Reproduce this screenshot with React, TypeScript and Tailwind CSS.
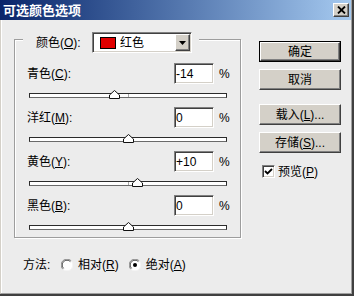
import React from 'react';

const rows = [
  { label: '青色', key: 'C', text: '-14', v: -14 },
  { label: '洋红', key: 'M', text: '0', v: 0 },
  { label: '黄色', key: 'Y', text: '+10', v: 10 },
  { label: '黑色', key: 'B', text: '0', v: 0 },
];

function Bevel({ children, className = '' }: { children?: React.ReactNode; className?: string }) {
  return (
    <div
      className={
        'bg-[#d4d0c8] border border-t-white border-l-white border-r-[#404040] border-b-[#404040] shadow-[inset_-1px_-1px_0_#808080] ' +
        className
      }
    >
      {children}
    </div>
  );
}

function Btn({ children, def }: { children: React.ReactNode; def?: boolean }) {
  const inner = (
    <Bevel className="h-full w-full flex items-center justify-center text-[12px] leading-none">{children}</Bevel>
  );
  if (def) return <div className="w-[82px] h-[21px] border border-black">{inner}</div>;
  return <div className="w-[82px] h-[21px]">{inner}</div>;
}

function Sunken({ children, className = '' }: { children?: React.ReactNode; className?: string }) {
  return (
    <div
      className={
        'bg-white border border-t-[#808080] border-l-[#808080] border-r-white border-b-white shadow-[inset_1px_1px_0_#404040,inset_-1px_-1px_0_#d4d0c8] ' +
        className
      }
    >
      {children}
    </div>
  );
}

function Slider({ v }: { v: number }) {
  const center = (v + 100) * 0.99 - 1;
  return (
    <div className="relative ml-[14px] mt-[9px] w-[198px] h-[5px] bg-white border border-[#2b2b2b] border-b-[#6a6a6a]">
      <div className="absolute left-[98px] top-0 w-px h-full bg-[#a8a8a8]" />
      <svg
        className="absolute"
        style={{ left: Math.round(center - 5.5), top: -4 }}
        width="11"
        height="9"
        viewBox="0 0 11 9"
      >
        <path d="M5.5 0.5 L10.5 5 L10.5 8.5 L0.5 8.5 L0.5 5 Z" fill="#fff" stroke="#111" strokeWidth="1" />
      </svg>
    </div>
  );
}

function Radio({ on }: { on?: boolean }) {
  return (
    <svg width="12" height="12" viewBox="0 0 12 12">
      <circle cx="6" cy="6" r="5.5" fill="#fff" />
      <path d="M1.8 10.2 A5.5 5.5 0 0 1 10.2 1.8" fill="none" stroke="#8a8a8a" strokeWidth="1" />
      <path d="M2.6 9.4 A4.5 4.5 0 0 1 9.4 2.6" fill="none" stroke="#505050" strokeWidth="1" />
      <path d="M10.2 1.8 A5.5 5.5 0 0 1 1.8 10.2" fill="none" stroke="#f4f4f4" strokeWidth="1" />
      {on && <circle cx="6" cy="6" r="2" fill="#000" />}
    </svg>
  );
}

export default function App() {
  return (
    <div className="w-[354px] h-[296px] bg-[#ececec] flex flex-col border-r-2 border-b-2 border-[#404040] font-['Liberation_Sans','Noto_Sans_CJK_SC',sans-serif] text-black text-[12px] overflow-hidden">
      <div className="h-[20px] shrink-0 flex items-center bg-linear-to-r from-[#0a246a] to-[#a6caf0] pl-[3px] pr-[2px] border-r border-[#a0a0a0]">
        <span className="text-white font-bold text-[13px] leading-none">可选颜色选项</span>
        <Bevel className="ml-auto w-[16px] h-[14px] flex items-center justify-center">
          <svg width="9" height="8" viewBox="0 0 9 8">
            <path d="M1 0.5 L8 7.5 M8 0.5 L1 7.5" stroke="#000" strokeWidth="1.8" />
          </svg>
        </Bevel>
      </div>
      <div className="flex-1 flex flex-col border-l border-l-[#d4d0c8] border-r border-r-[#a0a0a0] border-b border-b-[#a0a0a0] shadow-[inset_1px_0_0_#fff] pl-[13px] pt-[19px]">
        <div className="flex items-start">
          <div className="w-[227px] h-[199px] border border-[#9d9d9d] shadow-[inset_1px_1px_0_#fff,1px_1px_0_#fff]">
            <div className="-mt-[8px] ml-[8px] w-fit flex items-center bg-[#ececec] pl-[13px] pr-[7px]">
              <span className="w-[56px] leading-none">
                颜色(<u>O</u>):
              </span>
              <Sunken className="w-[100px] h-[21px] flex items-center pl-[7px]">
                <div className="w-[16px] h-[12px] border border-black bg-[#e00000]" />
                <span className="ml-[4px] leading-none">红色</span>
                <Bevel className="ml-auto mr-[1px] w-[15px] h-[17px] flex items-center justify-center">
                  <svg width="7" height="4" viewBox="0 0 7 4">
                    <path d="M0 0 H7 L3.5 4 Z" fill="#000" />
                  </svg>
                </Bevel>
              </Sunken>
            </div>
            <div className="mt-[10px]">
              {rows.map((r) => (
                <div key={r.key} className="h-[44px]">
                  <div className="flex items-center h-[21px] pl-[12px]">
                    <span className="w-[147px] leading-none">
                      {r.label}(<u>{r.key}</u>):
                    </span>
                    <Sunken className="w-[40px] h-[21px] flex items-center pl-[1px] leading-none">{r.text}</Sunken>
                    <span className="ml-[5px] leading-none">%</span>
                  </div>
                  <Slider v={r.v} />
                </div>
              ))}
            </div>
          </div>
          <div className="ml-[18px] mt-[2px] flex flex-col">
            <Btn def>确定</Btn>
            <div className="mt-[7px]">
              <Btn>取消</Btn>
            </div>
            <div className="mt-[14px]">
              <Btn>
                载入(<u>L</u>)...
              </Btn>
            </div>
            <div className="mt-[7px]">
              <Btn>
                存储(<u>S</u>)...
              </Btn>
            </div>
            <div className="mt-[12px] ml-[3px] flex items-center">
              <Sunken className="w-[13px] h-[13px] flex items-center justify-center">
                <svg width="9" height="9" viewBox="0 0 9 9">
                  <path d="M1 4 L3.5 6.5 L8 2" fill="none" stroke="#000" strokeWidth="1.8" />
                </svg>
              </Sunken>
              <span className="ml-[3px] leading-none">
                预览(<u>P</u>)
              </span>
            </div>
          </div>
        </div>
        <div className="mt-[19px] ml-[9px] h-[16px] flex items-center">
          <span className="w-[38px] leading-none">方法:</span>
          <Radio />
          <span className="ml-[5px] leading-none">
            相对(<u>R</u>)
          </span>
          <div className="ml-[10px] flex items-center">
            <Radio on />
          </div>
          <span className="ml-[5px] leading-none">
            绝对(<u>A</u>)
          </span>
        </div>
      </div>
    </div>
  );
}
